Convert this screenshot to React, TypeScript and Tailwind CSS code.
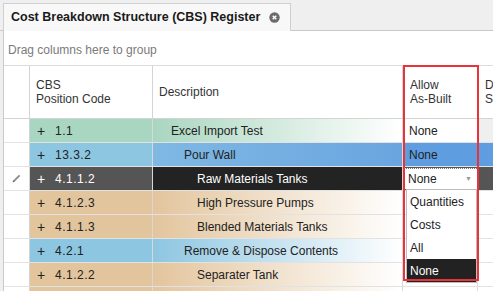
import React from 'react';

type Row = {
    code: string;
    desc: string;
    level: number;
    tone: 'green' | 'blue' | 'tan' | 'focus' | 'dark';
    allow?: string;
};

const ROWS: Row[] = [
    { code: '1.1', desc: 'Excel Import Test', level: 0, tone: 'green', allow: 'None' },
    { code: '13.3.2', desc: 'Pour Wall', level: 1, tone: 'focus', allow: 'None' },
    { code: '4.1.1.2', desc: 'Raw Materials Tanks', level: 2, tone: 'dark' },
    { code: '4.1.2.3', desc: 'High Pressure Pumps', level: 2, tone: 'tan' },
    { code: '4.1.1.3', desc: 'Blended Materials Tanks', level: 2, tone: 'tan' },
    { code: '4.2.1', desc: 'Remove & Dispose Contents', level: 1, tone: 'blue' },
    { code: '4.1.2.2', desc: 'Separater Tank', level: 2, tone: 'tan' },
    { code: '', desc: '', level: 2, tone: 'tan' },
];

const codeTone = {
    green: 'bg-[#a9d6c0] text-[#222]',
    blue: 'bg-[#8dc6e1] text-[#222]',
    tan: 'bg-[#e3c59d] text-[#222]',
    focus: 'bg-[#8dc6e1] text-[#222]',
    dark: 'bg-[#555555] text-white',
};

const descTone = {
    green: 'bg-gradient-to-r from-[#a9d6c0] to-[#ffffff] text-[#222]',
    blue: 'bg-gradient-to-r from-[#8dc6e1] to-[#ffffff] text-[#222]',
    tan: 'bg-gradient-to-r from-[#e3c59d] to-[#ffffff] text-[#222]',
    focus: 'bg-gradient-to-r from-[#7fb8e3] to-[#6aa5e0] text-[#222]',
    dark: 'bg-[#232323] text-white',
};

const indent = ['pl-[18px]', 'pl-[31px]', 'pl-[44px]'];

const Pencil = () => (
    <svg width="11" height="11" viewBox="0 0 10 10">
        <path d="M1.5 8.5 L2 6.8 L7.2 1.6 L8.4 2.8 L3.2 8 Z" fill="#8a8a8a" />
        <path d="M1.5 8.5 L2 6.8 L3.2 8 Z" fill="#5a5a5a" />
    </svg>
);

const CloseIcon = () => (
    <svg width="11" height="11" viewBox="0 0 11 11">
        <circle cx="5.5" cy="5.5" r="5.2" fill="#6b6b6b" />
        <path d="M3.7 3.7 L7.3 7.3 M7.3 3.7 L3.7 7.3" stroke="#fff" strokeWidth="1.4" />
    </svg>
);

const AllowCell: React.FC<{ row: Row }> = ({ row }) => {
    if (row.tone === 'dark') {
        return (
            <div className="w-[75px] shrink-0 h-full bg-[#555555] p-[1px]">
                <div className="h-full bg-white border-t border-dotted border-[#777] flex items-center justify-between pl-[4px] pr-[5px] text-[#222]">
                    <span>None</span>
                    <span className="text-[7px] text-[#999]">▼</span>
                </div>
            </div>
        );
    }
    const bg = row.tone === 'focus' ? 'bg-[#5d9de0]' : 'bg-white';
    return (
        <div className={`w-[75px] shrink-0 h-full flex items-center pl-[6px] border-r border-[#dcdcdc] ${bg} text-[#222]`}>
            {row.allow ?? ''}
        </div>
    );
};

const NextCell: React.FC<{ row: Row; first: boolean }> = ({ row, first }) => {
    let bg = 'bg-white';
    if (row.tone === 'dark') bg = 'bg-[#555555]';
    else if (row.tone === 'focus') bg = 'bg-[#5d9de0]';
    else if (first) bg = 'bg-[#efefef]';
    return <div className={`w-[60px] shrink-0 h-full ${bg}`} />;
};

const GridRow: React.FC<{ row: Row; first: boolean }> = ({ row, first }) => (
    <div className="flex h-[24px] border-b border-[#e2e2e2]">
        <div className="w-[26px] shrink-0 h-full bg-white border-r border-[#d4d4d4] flex items-center justify-center">
            {row.tone === 'dark' && <Pencil />}
        </div>
        <div className={`w-[123px] shrink-0 h-full flex items-center border-r border-[#d8d8d8] ${codeTone[row.tone]}`}>
            <span className="w-[25px] pl-[7px] text-[14px] leading-none">{row.code ? '+' : ''}</span>
            <span className="tracking-[0.5px]">{row.code}</span>
        </div>
        <div className={`w-[250px] shrink-0 h-full flex items-center border-r border-[#d8d8d8] ${indent[row.level]} ${descTone[row.tone]}`}>
            {row.desc}
        </div>
        <AllowCell row={row} />
        <NextCell row={row} first={first} />
    </div>
);

const App: React.FC = () => {
    const options = ['Quantities', 'Costs', 'All', 'None'];

    return (
        <div className="w-[493px] h-[291px] overflow-hidden bg-[#efefef] text-[12px] text-[#333]" style={{ fontFamily: '"Liberation Sans", Arial, sans-serif' }}>
            <div className="h-[31px] flex items-end pl-[3px] border-b border-[#c9c9c9]">
                <div className="w-[288px] h-[28px] -mb-[1px] bg-[#f8f8f8] border border-b-0 border-[#cfcfcf] flex items-center pl-[7px] pr-[10px] justify-between">
                    <span className="font-bold text-[#1a1a1a] text-[12.5px]">Cost Breakdown Structure (CBS) Register</span>
                    <CloseIcon />
                </div>
            </div>
            <div className="relative ml-[3px] h-[260px] bg-white border-l border-[#c9c9c9]">
                <div className="h-[35px] flex items-center pt-[3px] pl-[4px] text-[#7a7a7a] border-b border-[#dcdcdc]">
                    Drag columns here to group
                </div>
                <div className="flex h-[53px] border-b border-[#d4d4d4] text-[#333] leading-[14px]">
                    <div className="w-[26px] shrink-0 border-r border-[#d4d4d4]" />
                    <div className="w-[123px] shrink-0 border-r border-[#d4d4d4] flex items-center pl-[6px]">
                        <span>CBS<br />Position Code</span>
                    </div>
                    <div className="w-[250px] shrink-0 border-r border-[#d4d4d4] flex items-center pl-[6px]">
                        Description
                    </div>
                    <div className="w-[75px] shrink-0 border-r border-[#d4d4d4] flex items-center pl-[7px]">
                        <span>Allow<br />As-Built</span>
                    </div>
                    <div className="w-[60px] shrink-0 flex items-center pl-[7px]">
                        <span>Date<br />Start</span>
                    </div>
                </div>
                {ROWS.map((row, i) => (
                    <GridRow key={i} row={row} first={i === 0} />
                ))}

                <div className="absolute left-[402px] top-[158px] w-[71px] bg-white border border-[#bcbcbc] text-[#222]">
                    {options.map((o, i) => (
                        <div key={o} className={`h-[23px] flex items-center pl-[3px] ${i === options.length - 1 ? 'bg-[#222222] text-white h-[21px]' : ''}`}>
                            {o}
                        </div>
                    ))}
                </div>

                <div className="absolute left-[399px] top-[34px] w-[76px] h-[216px] border-2 border-[#e8333b] pointer-events-none" />
            </div>
        </div>
    );
};

export default App;
